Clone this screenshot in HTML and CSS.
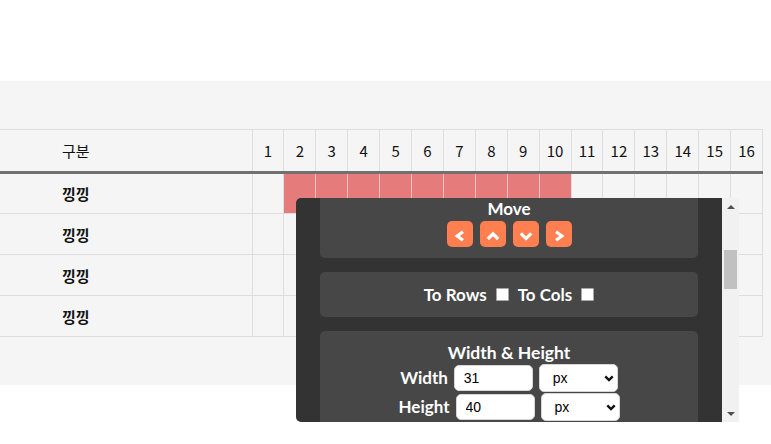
FILE: index.html
```html
<!DOCTYPE html>
<html lang="ko">
<head>
<meta charset="utf-8">
<title>Schedule</title>
<link rel="stylesheet" href="styles.css">
</head>
<body>
<div class="top"></div>
<section class="board">
  <table class="grid">
    <colgroup><col class="c-name"><col span="16" class="c-day"></colgroup>
    <thead>
      <tr><th class="name">구분</th><th>1</th><th>2</th><th>3</th><th>4</th><th>5</th><th>6</th><th>7</th><th>8</th><th>9</th><th>10</th><th>11</th><th>12</th><th>13</th><th>14</th><th>15</th><th>16</th></tr>
    </thead>
    <tbody>
      <tr><td class="name">&#xB091;&#xB091;</td><td></td><td class="on"></td><td class="on"></td><td class="on"></td><td class="on"></td><td class="on"></td><td class="on"></td><td class="on"></td><td class="on"></td><td class="on last"></td><td></td><td></td><td></td><td></td><td></td><td></td></tr>
      <tr><td class="name">&#xB091;&#xB091;</td><td></td><td></td><td></td><td></td><td></td><td></td><td></td><td></td><td></td><td></td><td></td><td></td><td></td><td></td><td></td><td></td></tr>
      <tr><td class="name">&#xB091;&#xB091;</td><td></td><td></td><td></td><td></td><td></td><td></td><td></td><td></td><td></td><td></td><td></td><td></td><td></td><td></td><td></td><td></td></tr>
      <tr><td class="name">&#xB091;&#xB091;</td><td></td><td></td><td></td><td></td><td></td><td></td><td></td><td></td><td></td><td></td><td></td><td></td><td></td><td></td><td></td><td></td></tr>
    </tbody>
  </table>
</section>

<div class="panel">
  <div class="panel-scroll">
    <div class="panel-content">
      <div class="card card-move">
        <div class="card-title">Move</div>
        <div class="move-btns">
          <button class="mv" type="button" aria-label="left"><svg width="14" height="14" viewBox="0 0 14 14"><polyline points="10,2.8 4.2,7 10,11.2" /></svg></button>
          <button class="mv" type="button" aria-label="up"><svg width="14" height="14" viewBox="0 0 14 14"><polyline points="1.8,10 7,4.8 12.2,10" /></svg></button>
          <button class="mv" type="button" aria-label="down"><svg width="14" height="14" viewBox="0 0 14 14"><polyline points="1.8,4.4 7,9.6 12.2,4.4" /></svg></button>
          <button class="mv" type="button" aria-label="right"><svg width="14" height="14" viewBox="0 0 14 14"><polyline points="4,2.8 9.8,7 4,11.2" /></svg></button>
        </div>
      </div>
      <div class="card card-to">
        <label class="chk-label">To Rows <input class="chk" type="checkbox"></label>
        <label class="chk-label">To Cols <input class="chk" type="checkbox"></label>
      </div>
      <div class="card card-size">
        <div class="card-title">Width &amp; Height</div>
        <div class="field">
          <span class="lbl">Width</span>
          <input class="num" type="text" value="31">
          <div class="sel"><select><option>px</option><option>%</option></select><svg class="caret" width="10" height="7" viewBox="0 0 10 7"><polyline points="1.3,1.3 5,5 8.7,1.3" /></svg></div>
        </div>
        <div class="field">
          <span class="lbl">Height</span>
          <input class="num" type="text" value="40">
          <div class="sel"><select><option>px</option><option>%</option></select><svg class="caret" width="10" height="7" viewBox="0 0 10 7"><polyline points="1.3,1.3 5,5 8.7,1.3" /></svg></div>
        </div>
      </div>
    </div>
  </div>
  <div class="vscroll">
    <div class="arr-box"><span class="arr up"></span></div>
    <div class="track"><span class="thumb"></span></div>
    <div class="arr-box"><span class="arr down"></span></div>
  </div>
</div>
</body>
</html>
```

FILE: styles.css
```css
* { box-sizing: border-box; }
html, body { margin: 0; background: #fff; }
body {
  position: relative;
  font-family: "Noto Sans CJK KR", sans-serif;
  width: 771px;
  height: 444px;
  overflow: hidden;
}
.top { height: 81px; }
.board {
  background: #f5f5f5;
  height: 304px;
  padding-top: 48px;
}
.grid {
  border-collapse: collapse;
  table-layout: fixed;
  width: 763px;
}
.c-name { width: 252px; }
.grid th, .grid td {
  border: 1px solid #dddddd;
  padding: 0;
  text-align: center;
  font-size: 15px;
  color: #111;
  height: 41px;
}
.grid th {
  font-weight: normal;
  border-bottom: 3px solid #717171;
  height: 43px;
}
.grid .name {
  border-left: none;
  text-align: left;
  padding-left: 62px;
}
.grid td.name { font-weight: bold; }
.grid td.on {
  background: #e57b7b;
  border-right-color: #f2c3c2;
}
.grid td.on.last { border-right-color: #dddddd; }

/* panel */
.panel {
  position: absolute;
  left: 296px;
  top: 198px;
  width: 443px;
  height: 224px;
  display: flex;
  background: #333333;
  border-radius: 5px 0 0 5px;
  overflow: hidden;
  font-family: Lato, "Open Sans", sans-serif;
  color: #fff;
}
.panel-scroll {
  flex: 1;
  overflow: hidden;
  padding: 0 24px;
}
.panel-content {
  margin-top: -8px;
  display: flex;
  flex-direction: column;
  gap: 14px;
}
.card {
  background: #474747;
  border-radius: 5px;
}
.card-title {
  font-weight: bold;
  font-size: 17px;
  line-height: 20px;
  text-align: center;
}
.card-size .card-title { font-size: 17.5px; }
.card-move { padding: 9px 0 11px; }
.move-btns {
  display: flex;
  justify-content: center;
  gap: 7px;
  margin-top: 2px;
}
.mv {
  width: 26px;
  height: 26px;
  border: 0;
  border-radius: 5px;
  background: #ff7f50;
  padding: 3px 0 0;
  display: flex;
  align-items: center;
  justify-content: center;
}
.mv polyline {
  fill: none;
  stroke: #fff;
  stroke-width: 3.2;
  stroke-linecap: butt;
  stroke-linejoin: miter;
}
.card-to {
  height: 45px;
  display: flex;
  align-items: center;
  justify-content: center;
  gap: 9px;
  font-weight: bold;
  font-size: 17px;
}
.chk-label {
  display: flex;
  align-items: center;
  gap: 9px;
}
.chk {
  appearance: none;
  -webkit-appearance: none;
  width: 13px;
  height: 13px;
  margin: 0;
  background: #fff;
  border: 1px solid #a8a8a8;
  border-radius: 1px;
}
.card-size { padding: 12px 0 10px; }
.field {
  display: flex;
  justify-content: center;
  align-items: center;
  gap: 6px;
  height: 29px;
}
.field:first-of-type { margin-top: 3px; }
.lbl {
  font-weight: bold;
  font-size: 17px;
}
.num {
  width: 79px;
  height: 26px;
  border: 1px solid #d6d6d6;
  border-radius: 5px;
  background: #fff;
  font: 14px "Liberation Sans", Arial, sans-serif;
  color: #000;
  padding: 0 9px;
  outline: none;
}
.sel {
  position: relative;
  width: 79px;
  height: 28px;
}
.sel select {
  appearance: none;
  -webkit-appearance: none;
  width: 100%;
  height: 100%;
  border: 1px solid #d6d6d6;
  border-radius: 5px;
  background: #fff;
  font: 14px "Liberation Sans", Arial, sans-serif;
  color: #000;
  padding: 0 0 0 13px;
}
.caret {
  position: absolute;
  right: 4px;
  top: 11px;
  pointer-events: none;
}
.caret polyline {
  fill: none;
  stroke: #111;
  stroke-width: 2.4;
}

/* scrollbar */
.vscroll {
  width: 17px;
  background: #f1f1f1;
  display: flex;
  flex-direction: column;
}
.arr-box {
  height: 17px;
  display: flex;
  align-items: center;
  justify-content: center;
}
.arr {
  width: 0;
  height: 0;
  border-left: 4px solid transparent;
  border-right: 4px solid transparent;
}
.arr.up { border-bottom: 4px solid #505050; }
.arr.down { border-top: 4px solid #505050; }
.track { flex: 1; padding: 35px 2px 0; }
.thumb {
  display: block;
  height: 39px;
  background: #c1c1c1;
}
```
